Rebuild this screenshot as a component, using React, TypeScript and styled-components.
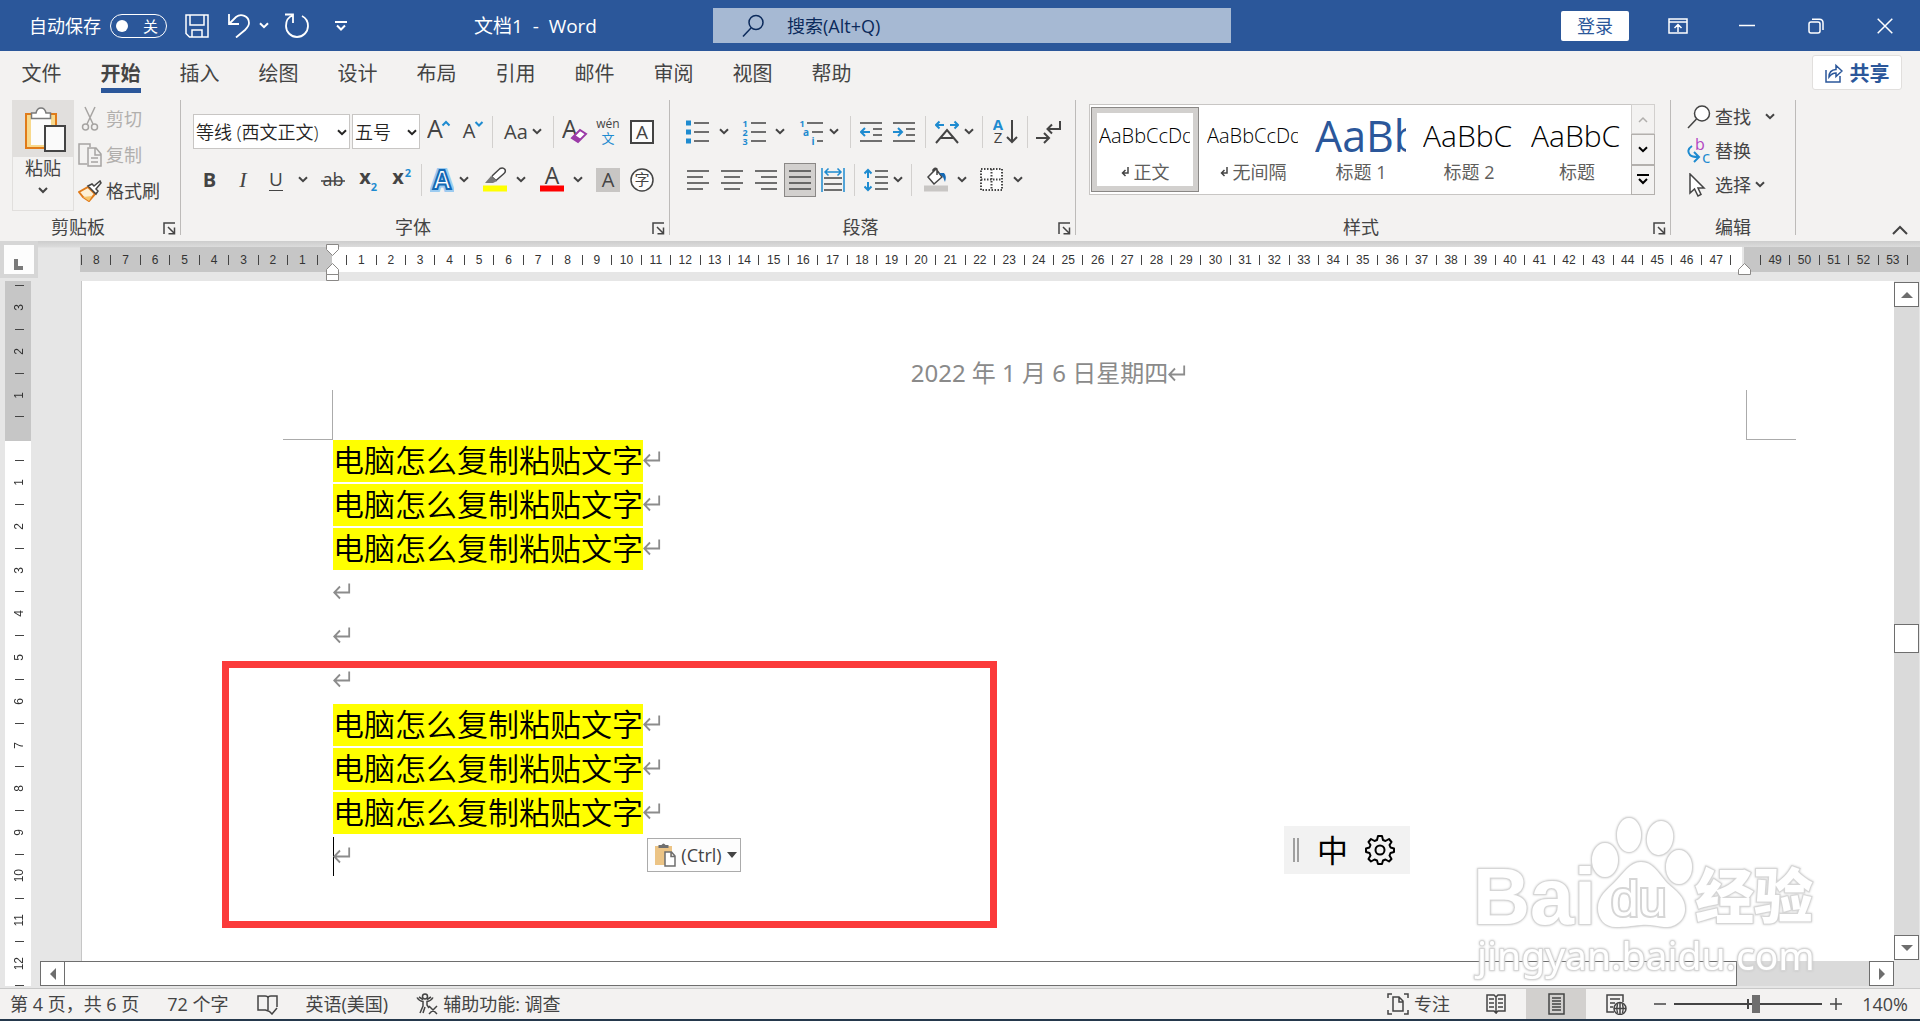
import React from "react";
import styled, { createGlobalStyle, css } from "styled-components";

const INK = "#444444";
const BLUE = "#1e8bd0";
const BRAND = "#2b579a";

const GlobalStyle = createGlobalStyle`
  * { box-sizing: border-box; }
  html, body { margin: 0; padding: 0; }
  body {
    font-family: "Open Sans", "Noto Sans CJK SC", sans-serif;
    font-size: 18px;
    color: ${INK};
    overflow: hidden;
  }
  button, input, select { font-family: inherit; font-size: inherit; color: inherit; }
  button { background: none; border: 0; padding: 0; cursor: pointer; }
  svg { display: block; flex: none; }
  p, h1 { margin: 0; font-weight: 400; }
`;

const Window = styled.div`
  display: flex;
  flex-direction: column;
  height: 100vh;
  background: #e6e6e6;
`;

/* ---------- title bar ---------- */

const TitleBar = styled.header`
  display: grid;
  grid-template-columns: 713fr 518fr 689fr;
  align-items: center;
  height: 51px;
  flex: none;
  background: ${BRAND};
  color: #fff;
`;

const TitleLeft = styled.div`
  display: flex;
  align-items: center;
  padding-left: 29px;
`;

const AutoSave = styled.label`
  display: flex;
  align-items: center;
  gap: 9px;
  line-height: 24px;
  margin-right: 9px;
`;

const Switch = styled.span`
  position: relative;
  display: flex;
  align-items: center;
  justify-content: flex-end;
  width: 57px;
  height: 24px;
  padding-right: 8px;
  border: 1px solid #fff;
  border-radius: 12px;
  font-size: 15px;
  &::before {
    content: "";
    position: absolute;
    left: 5px;
    width: 12px;
    height: 12px;
    border-radius: 50%;
    background: #fff;
  }
  input {
    position: absolute;
    inset: 0;
    margin: 0;
    opacity: 0;
  }
`;

const IconButton = styled.button<{ $w: number; $gap?: number; $on?: boolean }>`
  display: flex;
  align-items: center;
  justify-content: center;
  gap: ${(p) => p.$gap ?? 5}px;
  width: ${(p) => p.$w}px;
  height: 34px;
  flex: none;
  ${(p) => p.$on && css`
    background: #d2d0ce;
    border: 1px solid #8a8886;
  `}
`;

const DocTitle = styled.h1`
  margin-left: auto;
  padding-right: 116px;
  font-size: 19px;
  line-height: 24px;
  white-space: pre;
`;

const SearchBox = styled.label`
  display: flex;
  align-items: center;
  height: 35px;
  padding-left: 29px;
  gap: 23px;
  background: #a6b9d3;
  color: #0b2a5b;
  input {
    flex: 1;
    min-width: 0;
    border: 0;
    padding: 0;
    background: transparent;
    outline: 0;
  }
  input::placeholder { color: #0b2a5b; opacity: 1; }
`;

const TitleRight = styled.div`
  display: flex;
  align-items: center;
  justify-content: flex-end;
  padding-right: 1px;
`;

const SignIn = styled.button`
  width: 68px;
  height: 30px;
  margin-right: 14px;
  border-radius: 2px;
  background: #fff;
  color: ${BRAND};
  line-height: 24px;
`;

/* ---------- ribbon tabs ---------- */

const TabBar = styled.nav`
  display: flex;
  height: 47px;
  flex: none;
  padding: 0 18px 0 2px;
  background: #f3f2f1;
`;

const Tab = styled.button<{ $active?: boolean }>`
  display: flex;
  flex-direction: column;
  align-items: center;
  width: 79px;
  padding-top: 8px;
  font-size: 20px;
  line-height: 29px;
  font-weight: ${(p) => (p.$active ? 700 : 400)};
  span {
    border-bottom: 5px solid ${(p) => (p.$active ? BRAND : "transparent")};
  }
`;

const Share = styled.button`
  display: flex;
  align-items: center;
  justify-content: center;
  gap: 7px;
  width: 90px;
  height: 35px;
  margin: 4px 0 0 auto;
  border: 1px solid #e1dfdd;
  border-radius: 3px;
  background: #fff;
  color: ${BRAND};
  font-size: 20px;
  font-weight: 700;
`;

/* ---------- ribbon ---------- */

const Ribbon = styled.div`
  display: flex;
  height: 143px;
  flex: none;
  padding: 2px 0 6px;
  background: #f3f2f1;
`;

const Group = styled.section<{ $pad: string }>`
  display: flex;
  flex-direction: column;
  border-right: 1px solid #bdbbb9;
  padding: ${(p) => p.$pad};
`;

const GroupBody = styled.div<{ $top: number }>`
  display: flex;
  flex: 1;
  align-items: flex-start;
  padding-top: ${(p) => p.$top}px;
`;

const GroupFoot = styled.div<{ $l: number; $r: number }>`
  display: flex;
  align-items: flex-end;
  margin: 0 -${(p) => p.$r}px 0 -${(p) => p.$l}px;
  line-height: 16px;
  span { flex: 1; text-align: center; }
  button { width: 24px; padding-left: 7px; }
`;

const Stack = styled.div<{ $gap?: number }>`
  display: flex;
  flex-direction: column;
  gap: ${(p) => p.$gap ?? 0}px;
`;

const Row = styled.div`
  display: flex;
  align-items: center;
  height: 35px;
`;

const Sep = styled.i`
  width: 1px;
  height: 32px;
  margin: 0 4px;
  background: #d2d0ce;
`;

const Paste = styled.button`
  display: flex;
  flex-direction: column;
  align-items: center;
  width: 62px;
  height: 111px;
  margin-right: 4px;
  border: 1px solid #e1dfdd;
  line-height: 22px;
`;

const PasteTop = styled.span`
  display: flex;
  justify-content: center;
  align-self: stretch;
  height: 56px;
  padding: 6px 0 0 4px;
  background: #e1dfdd;
`;

const Command = styled.button<{ $h: number; $gap?: number; $off?: boolean }>`
  display: flex;
  align-items: center;
  height: ${(p) => p.$h}px;
  gap: 4px;
  line-height: 24px;
  color: ${(p) => (p.$off ? "#b1afad" : INK)};
  svg:last-child:not(:first-child) { margin-left: ${(p) => p.$gap ?? 0}px; }
`;

const SelectWrap = styled.label<{ $w: number }>`
  position: relative;
  width: ${(p) => p.$w}px;
  height: 35px;
  margin-right: 2px;
  &:last-of-type { margin-right: 0; }
  select {
    appearance: none;
    width: 100%;
    height: 100%;
    border: 1px solid #c8c6c4;
    border-radius: 0;
    padding: 0 0 0 2px;
    background: #fff;
    color: #252423;
    font-weight: 350;
  }
  svg {
    position: absolute;
    right: 3px;
    top: 15px;
    pointer-events: none;
  }
`;

const Glyph = styled.span<{ $size?: number; $bold?: boolean; $italic?: boolean }>`
  font-size: ${(p) => p.$size ?? 20}px;
  line-height: 24px;
  font-weight: ${(p) => (p.$bold ? 700 : 400)};
  ${(p) => p.$italic && css`
    font-family: "Liberation Serif", serif;
    font-style: italic;
  `}
`;

const Underlined = styled.span`
  width: 14px;
  text-align: center;
  font-size: 19px;
  line-height: 22px;
  border-bottom: 1px solid ${INK};
`;

const Gallery = styled.div`
  display: flex;
  height: 91px;
  width: 566px;
  border: 1px solid #c8c6c4;
  background: #fff;
`;

const StyleItem = styled.button<{ $on?: boolean }>`
  display: flex;
  flex-direction: column;
  width: 108px;
  height: 85px;
  margin-top: 2px;
  padding: 0 2px;
  border: 6px solid #fff;
  outline-offset: -1px;
  overflow: hidden;
  ${(p) => p.$on && css`
    border-color: #d2d0ce;
    outline: 1px solid #8a8886;
  `}
  &:first-child { margin-left: 1px; }
`;

const Sample = styled.span<{ $size: number; $color?: string; $light?: boolean }>`
  height: 47px;
  width: 91px;
  overflow: hidden;
  text-align: left;
  white-space: nowrap;
  font-size: ${(p) => p.$size}px;
  line-height: 46px;
  font-weight: ${(p) => (p.$light ? 350 : 400)};
  color: ${(p) => p.$color ?? "#000"};
`;

const StyleName = styled.span`
  display: flex;
  align-items: center;
  justify-content: center;
  gap: 5px;
  width: 92px;
  line-height: 24px;
  color: #605e5c;
`;

const GalleryNav = styled.div`
  display: flex;
  flex-direction: column;
  width: 24px;
  margin: -1px -1px -1px auto;
  button {
    display: flex;
    align-items: center;
    justify-content: center;
    flex: 1;
    border: 1px solid #b3b0ad;
    background: #f3f2f1;
  }
  button:first-child { border-color: #d2d0ce; }
`;

const Collapse = styled.button`
  margin-left: auto;
  align-self: flex-end;
  padding: 0 12px 0 0;
`;

/* ---------- rulers ---------- */

const RulerRow = styled.div`
  display: flex;
  height: 40px;
  flex: none;
  background: linear-gradient(#cdcdcd, #dcdcdc 6px, #e6e6e6 7px);
`;

const Corner = styled.button`
  width: 38px;
  height: 37px;
  border: 4px solid #d6d6d6;
  background: #fdfdfd;
  padding: 10px 0 0 10px;
`;

const HRuler = styled.div`
  position: relative;
  display: flex;
  flex: 1;
  height: 25px;
  margin: 6px 0 0 42px;
  padding: 1px 12px 0 1px;
  align-items: center;
  background: linear-gradient(90deg, #c6c6c6 252px, #fff 252px, #fff calc(100% - 178px), #e6e6e6 calc(100% - 178px), #e6e6e6 calc(100% - 176px), #c6c6c6 calc(100% - 176px));
`;

const HCell = styled.span`
  flex: 1 1 0;
  min-width: 0;
  height: 10px;
  border-left: 1px solid ${INK};
  text-align: center;
  font-family: "Liberation Sans", sans-serif;
  font-size: 12px;
  line-height: 11px;
  color: #333;
  &:last-of-type { border-right: 1px solid ${INK}; }
`;

const Marker = styled.svg<{ $left: string; $top: number }>`
  position: absolute;
  left: ${(p) => p.$left};
  top: ${(p) => p.$top}px;
`;

const Body = styled.main`
  position: relative;
  display: flex;
  flex: 1;
  min-height: 0;
`;

const VRuler = styled.div`
  display: flex;
  flex-direction: column;
  width: 26px;
  flex: none;
  margin: 0 9px 2px 5px;
  padding: 4px 0 0 2px;
  align-items: center;
  background: linear-gradient(#c6c6c6 160px, #fff 160px);
`;

const VCell = styled.span`
  display: flex;
  flex: 1 1 0;
  min-height: 0;
  width: 9px;
  align-items: center;
  justify-content: center;
  border-top: 1px solid ${INK};
  font-family: "Liberation Sans", sans-serif;
  font-size: 12px;
  line-height: 12px;
  color: #333;
  &:last-child { border-bottom: 1px solid ${INK}; }
  span {
    writing-mode: vertical-rl;
    transform: rotate(180deg);
  }
`;

/* ---------- document ---------- */

const Main = styled.div`
  display: flex;
  flex-direction: column;
  flex: 1;
  min-width: 0;
`;

const Page = styled.article`
  position: relative;
  flex: 1;
  min-height: 0;
  margin-left: 41px;
  padding: 77px 148px 0 251px;
  border-left: 1px solid #c6c6c6;
  background: #fff;
  overflow: hidden;
`;

const PageHeader = styled.p`
  display: flex;
  align-items: center;
  justify-content: center;
  margin-bottom: 52px;
  font-family: "Noto Sans", "Noto Sans CJK SC", sans-serif;
  font-size: 24px;
  line-height: 30px;
  color: #8a8a8a;
  svg { margin-right: -18px; }
`;

const Line = styled.p`
  display: flex;
  align-items: flex-start;
  height: 44px;
  svg { margin-top: 10px; }
`;

const Marked = styled.mark`
  height: 42px;
  background: #ffff00;
  color: #000;
  font-family: "Noto Sans CJK SC", sans-serif;
  font-size: 31px;
  line-height: 38px;
  font-weight: 350;
`;

const Caret = styled.i`
  width: 1px;
  height: 39px;
  margin: 1px -1px 0 0;
  background: #000;
`;

const CropMark = styled.i<{ $side: "left" | "right" }>`
  position: absolute;
  top: 109px;
  width: 50px;
  height: 50px;
  border-bottom: 1px solid #ababab;
  ${(p) => p.$side === "left"
    ? css`left: 201px; border-right: 1px solid #ababab;`
    : css`right: 98px; border-left: 1px solid #ababab;`}
`;

const RedFrame = styled.div`
  position: absolute;
  left: 140px;
  top: 380px;
  width: 775px;
  height: 267px;
  border: 7px solid #fb3a3a;
  pointer-events: none;
`;

const PasteOptions = styled.button`
  position: absolute;
  left: 565px;
  top: 557px;
  display: flex;
  align-items: center;
  justify-content: space-between;
  width: 94px;
  height: 34px;
  padding: 0 3px 0 7px;
  border: 1px solid #ababab;
  background: #fdfdfd;
  line-height: 24px;
`;

const ImeBar = styled.div`
  position: absolute;
  left: 1202px;
  top: 545px;
  display: flex;
  align-items: center;
  width: 126px;
  height: 48px;
  padding-left: 9px;
  background: #f2f2f2;
  color: #000;
  span {
    margin: 0 17px 0 18px;
    font-size: 31px;
    line-height: 40px;
  }
`;

const Grip = styled.i`
  width: 6px;
  height: 24px;
  border: solid #a0a0a0;
  border-width: 0 2px;
`;

const Watermark = styled.svg`
  position: absolute;
  right: 90px;
  bottom: -3px;
  pointer-events: none;
  filter: drop-shadow(0 0 1px #c4c4c4);
`;

/* ---------- scroll bars ---------- */

const ScrollButton = styled.button`
  display: flex;
  align-items: center;
  justify-content: center;
  width: 25px;
  height: 25px;
  flex: none;
  border: 1px solid #6e6e6e;
  background: #fff;
`;

const HScroll = styled.div`
  display: flex;
  height: 25px;
  flex: none;
  margin-bottom: 2px;
  background: #dadada;
`;

const HThumb = styled.div`
  flex: 1;
  margin-right: 132px;
  border: 1px solid #6e6e6e;
  border-left: 0;
  background: #fff;
`;

const VScroll = styled.div`
  display: flex;
  flex-direction: column;
  width: 25px;
  flex: none;
  margin: 1px 1px 28px 0;
  background: #dadada;
`;

const VThumb = styled.div`
  height: 29px;
  margin: auto 0;
  border: 1px solid #6e6e6e;
  background: #fff;
`;

const VTrack = styled.div`
  display: flex;
  flex-direction: column;
  flex: 1;
  padding-top: 34px;
`;

/* ---------- status bar ---------- */

const StatusBar = styled.footer`
  display: flex;
  align-items: center;
  height: 33px;
  flex: none;
  padding-left: 10px;
  border-top: 1px solid #c8c8c8;
  border-bottom: 2px solid #24384c;
  background: #f3f2f1;
  line-height: 24px;
`;

const StatusItem = styled.button`
  display: flex;
  align-items: center;
  gap: 5px;
  margin-right: 28px;
  line-height: 24px;
  white-space: nowrap;
`;

const FocusItem = styled(StatusItem)`
  margin: 0 16px 0 auto;
`;

const ViewButton = styled.button<{ $on?: boolean }>`
  display: flex;
  align-items: center;
  justify-content: center;
  align-self: stretch;
  width: 60px;
  background: ${(p) => (p.$on ? "#d2d0ce" : "transparent")};
`;

const Zoom = styled.div`
  display: flex;
  align-items: center;
  gap: 8px;
  margin-left: 8px;
  padding-right: 12px;
  output { width: 58px; text-align: right; }
`;

const Slider = styled.input`
  appearance: none;
  width: 148px;
  height: 22px;
  margin: 0;
  background:
    linear-gradient(${INK}, ${INK}) 73px 50% / 2px 10px no-repeat,
    linear-gradient(${INK}, ${INK}) 0 50% / 100% 2px no-repeat;
  &::-webkit-slider-thumb {
    appearance: none;
    width: 8px;
    height: 18px;
    background: #6e6e6e;
  }
`;

/* ---------- icons ---------- */

type IconProps = { w: number; h?: number; c?: string; s?: number; children: React.ReactNode };
const Icon = ({ w, h = w, c = INK, s = 1.5, children }: IconProps) => (
  <svg width={w} height={h} viewBox={`0 0 ${w} ${h}`} fill="none" stroke={c} strokeWidth={s} aria-hidden="true">
    {children}
  </svg>
);

const Chevron = ({ c = INK }: { c?: string }) => (
  <Icon w={10} h={7} c={c} s={2}><path d="M1 1.2 5 5.2 9 1.2" /></Icon>
);

const ReturnMark = () => (
  <Icon w={18} h={18} c="#8c8c8c" s={1.8}><path d="M16.2 1.5V10.5H1M7 4.5 1.2 10.5 7 16.5" /></Icon>
);

type LetterProps = { x: number; y: number; size: number; fill?: string; bold?: boolean; children: string };
const Letter = ({ x, y, size, fill = INK, bold, children }: LetterProps) => (
  <text x={x} y={y} fontSize={size} fill={fill} stroke="none" fontWeight={bold ? 700 : 400} textAnchor="middle">{children}</text>
);

const Lines = ({ y, x1, x2 }: { y: number[]; x1: number[]; x2: number[] }) => (
  <path d={y.map((v, i) => `M${x1[i]} ${v}H${x2[i]}`).join("")} />
);

const Launcher = () => (
  <Icon w={13} h={13}><path d="M1 12V1H12M5 5 11 11M11.5 5.5V11.7H5.5" /></Icon>
);

const SearchIcon = ({ c }: { c?: string }) => (
  <Icon w={24} h={24} c={c}><circle cx="15" cy="8.5" r="7.5" fill="#fff" /><path d="M9.5 14 1 23" /></Icon>
);

const Foot = ({ label, l, r }: { label: string; l: number; r: number }) => (
  <GroupFoot $l={l} $r={r}>
    <span>{label}</span>
    <button aria-label={`${label}设置`}><Launcher /></button>
  </GroupFoot>
);

const tabs = ["文件", "开始", "插入", "绘图", "设计", "布局", "引用", "邮件", "审阅", "视图", "帮助"];
const hCells = Array.from({ length: 62 }, (_, i) => i - 8);
const vCells = Array.from({ length: 16 }, (_, i) => i - 3);
const phrase = "电脑怎么复制粘贴文字";
const paragraphs = [phrase, phrase, phrase, "", "", "", phrase, phrase, phrase];

const TopBar = () => (
  <TitleBar>
    <TitleLeft>
      <AutoSave>
        自动保存
        <Switch><input type="checkbox" />关</Switch>
      </AutoSave>
      <IconButton $w={42} aria-label="保存">
        <Icon w={24} c="#fff"><path d="M1 1H23V23H4.5L1 19.5ZM5 1V11H19V1M7 23V16H17V23" /></Icon>
      </IconButton>
      <IconButton $w={60} $gap={8} aria-label="撤消">
        <Icon w={24} h={25} c="#fff" s={1.8}><path d="M2 1V11H12M2 11 9 4C14 0 22 3 22 10C22 13 20 15 18 17L9 24.5" /></Icon>
        <Chevron c="#fff" />
      </IconButton>
      <IconButton $w={38} aria-label="重复">
        <Icon w={26} h={25} c="#fff" s={1.8}><path d="M1 1.5H9V10M9 2.5C4 4 2 8.5 2 13C2 19 7 24 13 24C19 24 24 19 24 13C24 8.5 22 5 18 3" /></Icon>
      </IconButton>
      <IconButton $w={50} aria-label="自定义快速访问工具栏">
        <Icon w={12} h={10} c="#fff" s={2}><path d="M0 1H12M2 4.5 6 8.5 10 4.5" /></Icon>
      </IconButton>
      <DocTitle>{"文档1  -  Word"}</DocTitle>
    </TitleLeft>
    <SearchBox>
      <Icon w={22} h={24} c="#0b2a5b"><circle cx="14" cy="8.5" r="7" /><path d="M9 14 1 22.5" /></Icon>
      <input type="search" placeholder="搜索(Alt+Q)" aria-label="搜索" />
    </SearchBox>
    <TitleRight>
      <SignIn>登录</SignIn>
      <IconButton $w={69} aria-label="功能区显示选项">
        <Icon w={20} h={16} c="#fff"><path d="M1 1H19V15H1ZM1 4H19M10 14V7M6.5 10 10 6.5 13.5 10" /></Icon>
      </IconButton>
      <IconButton $w={69} aria-label="最小化"><Icon w={16} c="#fff"><path d="M0 7.5H16" /></Icon></IconButton>
      <IconButton $w={69} aria-label="还原">
        <Icon w={16} c="#fff"><rect x="1" y="4" width="11" height="11" rx="2" /><path d="M4 1.2H11.5Q15 1.2 15 5V12" /></Icon>
      </IconButton>
      <IconButton $w={69} aria-label="关闭"><Icon w={16} c="#fff"><path d="M.7.7 15.3 15.3M15.3.7.7 15.3" /></Icon></IconButton>
    </TitleRight>
  </TitleBar>
);

const Clipboard = () => (
  <Group $pad="0 20px 0 12px" aria-label="剪贴板">
    <GroupBody $top={0}>
      <Paste>
        <PasteTop>
          <Icon w={42} h={46}>
            <rect x="2" y="7" width="30" height="34" fill="#f8d98c" stroke="#e07b1a" strokeWidth="2" />
            <rect x="7" y="10" width="20" height="28" fill="#fcfcfc" stroke="none" />
            <path d="M7.5 11.5V6H12Q13 1 17 1Q21 1 22 6H26.5V11.5Z" fill="#fff" stroke="#7a7a7a" />
            <rect x="21" y="19" width="20" height="25" fill="#fafafa" strokeWidth="2" />
          </Icon>
        </PasteTop>
        粘贴
        <Icon w={10} h={26} s={2}><path d="M1 9 5 13 9 9" /></Icon>
      </Paste>
      <Stack>
        <Command $h={37} $off>
          <Icon w={24} h={26} c="#a6a4a2"><path d="M7 1 15 18M17 1 9 18" /><circle cx="7.5" cy="21" r="3" /><circle cx="16.5" cy="21" r="3" /></Icon>
          剪切
        </Command>
        <Command $h={36} $off>
          <Icon w={24} h={24} c="#a6a4a2"><path d="M9 21H1V1H12V4" /><path d="M10 5H18L23 11V23H10ZM17 5V12H23M13 15H20M13 19H20" /></Icon>
          复制
        </Command>
        <Command $h={36}>
          <Icon w={24} h={22}>
            <path d="M1 12 10 7 17 14 11 21 5 17Z" fill="#fdf0d5" stroke="#e07b1a" strokeWidth="2" />
            <path d="M5 17 14 16 11 21Z" fill="#f5c469" stroke="none" />
            <path d="M10 6 14 4 16 6 22 1 23 3 18 9 20 11 18 14Z" fill="#fff" />
          </Icon>
          格式刷
        </Command>
      </Stack>
    </GroupBody>
    <Foot label="剪贴板" l={12} r={20} />
  </Group>
);

const FontGroup = () => (
  <Group $pad="0 9px 0 12px" aria-label="字体">
    <GroupBody $top={14}>
      <Stack $gap={13}>
        <Row>
          <SelectWrap $w={157}>
            <select aria-label="字体"><option>等线 (西文正文)</option></select><Chevron c="#252423" />
          </SelectWrap>
          <SelectWrap $w={68}>
            <select aria-label="字号"><option>五号</option></select><Chevron c="#252423" />
          </SelectWrap>
          <IconButton $w={38} aria-label="增大字号">
            <Icon w={24} h={28}><Letter x={8} y={20} size={25}>A</Letter><path d="M15.5 7.5 19 4 22.5 7.5" stroke={BLUE} strokeWidth="2" /></Icon>
          </IconButton>
          <IconButton $w={30} aria-label="减小字号">
            <Icon w={22} h={28}><Letter x={7} y={20} size={20}>A</Letter><path d="M13.5 4 17 7.5 20.5 4" stroke={BLUE} strokeWidth="2" /></Icon>
          </IconButton>
          <Sep />
          <IconButton $w={52} $gap={4} aria-label="更改大小写"><Glyph $size={20}>Aa</Glyph><Chevron /></IconButton>
          <Sep />
          <IconButton $w={34} aria-label="清除所有格式">
            <Icon w={26} h={26}>
              <Letter x={8} y={19} size={25}>A</Letter>
              <path d="M10 19 18 11 24 15 16 23Z" fill="#fff" stroke="#9b3ba8" strokeWidth="2" /><path d="M10 19 13 16 19 20 16 23Z" fill="#9b3ba8" stroke="none" />
            </Icon>
          </IconButton>
          <IconButton $w={32} aria-label="拼音指南">
            <Icon w={26} h={28}><Letter x={13} y={10} size={12}>wén</Letter><Letter x={13} y={25} size={13} fill={BLUE}>文</Letter></Icon>
          </IconButton>
          <IconButton $w={36} aria-label="字符边框">
            <Icon w={24} s={2}><rect x="1" y="1" width="22" height="22" fill="#fdfdfd" /><Letter x={12} y={19} size={19}>A</Letter></Icon>
          </IconButton>
        </Row>
        <Row>
          <IconButton $w={33} aria-label="加粗"><Glyph $bold>B</Glyph></IconButton>
          <IconButton $w={34} aria-label="倾斜"><Glyph $italic $size={22}>I</Glyph></IconButton>
          <IconButton $w={32} aria-label="下划线"><Underlined>U</Underlined></IconButton>
          <IconButton $w={22} aria-label="下划线类型"><Chevron /></IconButton>
          <IconButton $w={37} aria-label="删除线">
            <Icon w={24}><Letter x={12} y={18} size={18}>ab</Letter><path d="M0 13H24" /></Icon>
          </IconButton>
          <IconButton $w={36} aria-label="下标">
            <Icon w={20} h={28}><Letter x={6} y={18} size={20} bold>x</Letter><Letter x={15} y={25} size={11} fill={BLUE} bold>2</Letter></Icon>
          </IconButton>
          <IconButton $w={30} aria-label="上标">
            <Icon w={20} h={28}><Letter x={6} y={18} size={20} bold>x</Letter><Letter x={16} y={11} size={11} fill={BLUE} bold>2</Letter></Icon>
          </IconButton>
          <Sep />
          <IconButton $w={46} aria-label="文本效果">
            <Icon w={24}>
              <text x="12" y="21" fontSize="26" fontWeight="700" textAnchor="middle" fill="#fff" stroke="#9ccbf0" strokeWidth="6">A</text>
              <text x="12" y="21" fontSize="26" fontWeight="700" textAnchor="middle" fill="#fff" stroke="#1469b5" strokeWidth="2">A</text>
            </Icon>
            <Chevron />
          </IconButton>
          <IconButton $w={64} $gap={9} aria-label="文本突出显示颜色">
            <Icon w={24} h={25}>
              <path d="M9 9 17 1.5Q20 0 22 2.5 23 5 21 6.5L13 13.5 8.5 9.5" fill="#fff" /><path d="M8 9 14 14 10 16H2Z" fill="#7a7a7a" stroke="none" />
              <path d="M0 21.5H24" stroke="#ffff00" strokeWidth="6" />
            </Icon>
            <Chevron />
          </IconButton>
          <IconButton $w={50} $gap={9} aria-label="字体颜色">
            <Icon w={24} h={25}><Letter x={12} y={17} size={23}>A</Letter><path d="M0 21.5H24" stroke="#ff0000" strokeWidth="6" /></Icon>
            <Chevron />
          </IconButton>
          <IconButton $w={44} aria-label="字符底纹">
            <Icon w={24}><rect width="24" height="24" fill="#c8c6c4" stroke="none" /><Letter x={12} y={19} size={20}>A</Letter></Icon>
          </IconButton>
          <IconButton $w={24} aria-label="带圈字符">
            <Icon w={24}><circle cx="12" cy="12" r="11" fill="#fdfdfd" /><Letter x={12} y={17} size={15}>字</Letter></Icon>
          </IconButton>
        </Row>
      </Stack>
    </GroupBody>
    <Foot label="字体" l={12} r={9} />
  </Group>
);

const ParagraphGroup = () => (
  <Group $pad="0 11px 0 10px" aria-label="段落">
    <GroupBody $top={14}>
      <Stack $gap={13}>
        <Row>
          <IconButton $w={54} $gap={10} aria-label="项目符号">
            <Icon w={23} h={24}>
              <path d="M0 3H5M0 12H5M0 21H5" stroke={BLUE} strokeWidth="5" /><Lines y={[3, 12, 21]} x1={[8, 8, 8]} x2={[23, 23, 23]} />
            </Icon>
            <Chevron />
          </IconButton>
          <IconButton $w={58} $gap={9} aria-label="编号">
            <Icon w={24} h={28}>
              <Letter x={3} y={9} size={9} fill={BLUE} bold>1</Letter><Letter x={3} y={18} size={9} fill={BLUE} bold>2</Letter><Letter x={3} y={27} size={9} fill={BLUE} bold>3</Letter>
              <Lines y={[5, 14, 23]} x1={[9, 9, 9]} x2={[24, 24, 24]} />
            </Icon>
            <Chevron />
          </IconButton>
          <IconButton $w={54} $gap={6} aria-label="多级列表">
            <Icon w={24} h={28}>
              <Letter x={3} y={9} size={9} fill={BLUE} bold>1</Letter><Letter x={7} y={18} size={10} fill={BLUE} bold>a</Letter><Letter x={14} y={27} size={10} fill={BLUE} bold>i</Letter>
              <Lines y={[5, 14, 23]} x1={[8, 13, 18]} x2={[24, 24, 24]} />
            </Icon>
            <Chevron />
          </IconButton>
          <Sep />
          <IconButton $w={32} aria-label="减少缩进量">
            <Icon w={22}><Lines y={[2, 8, 14, 20]} x1={[0, 13, 13, 0]} x2={[22, 22, 22, 22]} /><path d="M10 11H1M5 7 1 11 5 15" stroke={BLUE} strokeWidth="2" /></Icon>
          </IconButton>
          <IconButton $w={34} aria-label="增加缩进量">
            <Icon w={22}><Lines y={[2, 8, 14, 20]} x1={[0, 13, 13, 0]} x2={[22, 22, 22, 22]} /><path d="M0 11H9M5 7 9 11 5 15" stroke={BLUE} strokeWidth="2" /></Icon>
          </IconButton>
          <Sep />
          <IconButton $w={48} aria-label="中文版式">
            <Icon w={24}>
              <path d="M1 23 12 10 23 23M5.5 18H18.5" strokeWidth="2" />
              <path d="M9 5H1M4.5 1.5 1 5 4.5 8.5M15 5H23M19.5 1.5 23 5 19.5 8.5" stroke={BLUE} strokeWidth="2" />
            </Icon>
            <Chevron />
          </IconButton>
          <Sep />
          <IconButton $w={36} aria-label="排序">
            <Icon w={25} h={28}><Letter x={5} y={12} size={15} fill={BLUE} bold>A</Letter><Letter x={5} y={25} size={15}>Z</Letter><path d="M19 2V24M14 19 19 24 24 19" strokeWidth="2" /></Icon>
          </IconButton>
          <Sep />
          <IconButton $w={32} aria-label="显示编辑标记">
            <Icon w={25} h={24}><path d="M24 1V9H12M16 4.5 11.5 9 16 13.5M0 18H12M8 13 13 18 8 23" strokeWidth="2" /></Icon>
          </IconButton>
        </Row>
        <Row>
          <IconButton $w={36} aria-label="左对齐"><Icon w={22}><Lines y={[2, 8, 14, 20]} x1={[0, 0, 0, 0]} x2={[22, 16, 22, 16]} /></Icon></IconButton>
          <IconButton $w={32} aria-label="居中"><Icon w={22}><Lines y={[2, 8, 14, 20]} x1={[0, 3, 0, 3]} x2={[22, 19, 22, 19]} /></Icon></IconButton>
          <IconButton $w={36} aria-label="右对齐"><Icon w={22}><Lines y={[2, 8, 14, 20]} x1={[0, 6, 0, 6]} x2={[22, 22, 22, 22]} /></Icon></IconButton>
          <IconButton $w={32} $on aria-label="两端对齐"><Icon w={22}><Lines y={[2, 8, 14, 20]} x1={[0, 0, 0, 0]} x2={[22, 22, 22, 22]} /></Icon></IconButton>
          <IconButton $w={34} aria-label="分散对齐">
            <Icon w={24}>
              <Lines y={[10, 16, 22]} x1={[3, 3, 3]} x2={[21, 21, 21]} />
              <path d="M1 0V24M23 0V24M4 4H20M7.5.5 4 4 7.5 7.5M16.5.5 20 4 16.5 7.5" stroke={BLUE} />
            </Icon>
          </IconButton>
          <Sep />
          <IconButton $w={48} aria-label="行和段落间距">
            <Icon w={24}>
              <Lines y={[3, 9, 15, 21]} x1={[11, 11, 11, 11]} x2={[24, 24, 24, 24]} />
              <path d="M4 10V2M.5 5.5 4 2 7.5 5.5M4 14V22M.5 18.5 4 22 7.5 18.5" stroke={BLUE} strokeWidth="2" />
            </Icon>
            <Chevron />
          </IconButton>
          <Sep />
          <IconButton $w={58} $gap={9} aria-label="底纹">
            <Icon w={24} h={25}>
              <path d="M4 10 12 2 18 10 10 17ZM9 6V3Q11 0 13 2V8" fill="#fff" /><path d="M15 6 20 6Q23 9 21 15L19 10Z" fill="#1469b5" stroke="none" />
              <path d="M0 21.5H24" stroke="#c8c6c4" strokeWidth="6" />
            </Icon>
            <Chevron />
          </IconButton>
          <IconButton $w={54} $gap={10} aria-label="边框">
            <Icon w={23}><path d="M1 1H22V22H1ZM11.5 1V22M1 11.5H22" fill="#fdfdfd" strokeWidth="2" strokeDasharray="1.5 1.5" /></Icon>
            <Chevron />
          </IconButton>
        </Row>
      </Stack>
    </GroupBody>
    <Foot label="段落" l={10} r={11} />
  </Group>
);

const SmallReturn = () => <Icon w={8} h={12}><path d="M7 1V7H1.5M4.5 4 1.5 7 4.5 10" /></Icon>;

const StylesGroup = () => (
  <Group $pad="0 15px 0 13px" aria-label="样式">
    <GroupBody $top={4}>
      <Gallery>
        <StyleItem $on><Sample $size={20} $light>AaBbCcDd</Sample><StyleName><SmallReturn />正文</StyleName></StyleItem>
        <StyleItem><Sample $size={20} $light>AaBbCcDd</Sample><StyleName><SmallReturn />无间隔</StyleName></StyleItem>
        <StyleItem><Sample $size={43} $color={BRAND}>AaBb</Sample><StyleName>标题 1</StyleName></StyleItem>
        <StyleItem><Sample $size={30} $light>AaBbC</Sample><StyleName>标题 2</StyleName></StyleItem>
        <StyleItem><Sample $size={30} $light>AaBbC</Sample><StyleName>标题</StyleName></StyleItem>
        <GalleryNav>
          <button aria-label="上一行"><Icon w={10} h={7} c="#b1afad"><path d="M1 6 5 2 9 6" /></Icon></button>
          <button aria-label="下一行"><Chevron c="#000" /></button>
          <button aria-label="其他样式"><Icon w={12} h={11} c="#000" s={2}><path d="M0 1H12M2 5 6 9 10 5" /></Icon></button>
        </GalleryNav>
      </Gallery>
    </GroupBody>
    <Foot label="样式" l={13} r={15} />
  </Group>
);

const EditGroup = () => (
  <Group $pad="0 20px 0 16px" aria-label="编辑">
    <GroupBody $top={0}>
      <Stack>
        <Command $h={33} $gap={10}><SearchIcon />查找<Chevron /></Command>
        <Command $h={35}>
          <Icon w={24} h={28}>
            <Letter x={13} y={13} size={16} fill="#b146c2">b</Letter><Letter x={19} y={26} size={17} fill={BLUE}>c</Letter>
            <path d="M5 9Q-1 13 3 18 5 20 11 20M7 15 12 20 7 25" stroke={BLUE} strokeWidth="2" />
          </Icon>
          替换
        </Command>
        <Command $h={33}>
          <Icon w={24} h={24}><path d="M3 1V20L7.5 16 11 23 14 21.5 11 15H17Z" fill="#fff" /></Icon>
          选择<Chevron />
        </Command>
      </Stack>
    </GroupBody>
    <GroupFoot $l={16} $r={20}><span>编辑</span></GroupFoot>
  </Group>
);

const Document = () => (
  <Page>
    <PageHeader>2022 年 1 月 6 日星期四<ReturnMark /></PageHeader>
    {paragraphs.map((text, i) => (
      <Line key={i}>{text && <Marked>{text}</Marked>}<ReturnMark /></Line>
    ))}
    <Line><Caret /><ReturnMark /></Line>
    <CropMark $side="left" />
    <CropMark $side="right" />
    <RedFrame />
    <PasteOptions>
      <Icon w={21} h={24}>
        <path d="M0 3H17V22H0Z" fill="#ecc485" stroke="none" /><path d="M3.5 5V2H6.5Q8.5-1 10.5 2H13.5V5Z" fill="#6e6e6e" stroke="none" />
        <path d="M10 9H16.5L20 13V23H10ZM16 9V13.5H20" fill="#fff" stroke="#6e6e6e" />
      </Icon>
      (Ctrl)
      <Icon w={10} h={6}><path d="M0 0H10L5 6Z" fill={INK} stroke="none" /></Icon>
    </PasteOptions>
    <ImeBar>
      <Grip />
      <span>中</span>
      <Icon w={30} c="#000" s={2}>
        <path d="M13 1H17L18 5 20.5 6 24 4 26.5 7 24.5 10 25.5 12.5 29 13.5V17L25.5 18 24.5 20.5 26.5 24 24 26.5 20.5 24.5 18 25.5 17 29H13L12 25.5 9.5 24.5 6 26.5 3.5 24 5.5 20.5 4.5 18 1 17V13.5L4.5 12.5 5.5 10 3.5 7 6 4 9.5 6 12 5Z" strokeLinejoin="round" />
        <circle cx="15" cy="15" r="4.5" />
      </Icon>
    </ImeBar>
  </Page>
);

export default function App() {
  return (
    <Window>
      <GlobalStyle />
      <TopBar />
      <TabBar>
        {tabs.map((t) => <Tab key={t} $active={t === "开始"}><span>{t}</span></Tab>)}
        <Share>
          <Icon w={18} h={20} c={BRAND}><path d="M1 7V19H15V13M4 14Q4 7 11 6.5V2.5L17 8 11 13.5V10Q7 10 4 14Z" /></Icon>
          共享
        </Share>
      </TabBar>
      <Ribbon>
        <Clipboard />
        <FontGroup />
        <ParagraphGroup />
        <StylesGroup />
        <EditGroup />
        <Collapse aria-label="折叠功能区"><Icon w={16} h={10} s={2}><path d="M1 9 8 2 15 9" /></Icon></Collapse>
      </Ribbon>
      <RulerRow>
        <Corner aria-label="制表符"><Icon w={9} h={11} c="#7a7a7a" s={4}><path d="M2 0V9H9" /></Icon></Corner>
        <HRuler>
          {hCells.map((n) => <HCell key={n}>{n === 0 || n === 48 ? "" : Math.abs(n)}</HCell>)}
          <Marker $left="246px" $top={-3} width="13" height="37" viewBox="0 0 13 37" fill="#fff" stroke="#8a8886">
            <path d="M.5.5H12.5V5.5L6.5 11.5 .5 5.5ZM.5 25.5 6.5 19.5 12.5 25.5V30.5H.5ZM.5 30.5H12.5V36.5H.5Z" />
          </Marker>
          <Marker $left="calc(100% - 182px)" $top={16} width="13" height="12" viewBox="0 0 13 12" fill="#fff" stroke="#8a8886">
            <path d="M.5 6.5 6.5.5 12.5 6.5V11.5H.5Z" />
          </Marker>
        </HRuler>
      </RulerRow>
      <Body>
        <VRuler>
          {vCells.map((n) => <VCell key={n}><span>{n === 0 ? "" : Math.abs(n)}</span></VCell>)}
        </VRuler>
        <Main>
          <Document />
          <HScroll>
            <ScrollButton aria-label="向左滚动"><Icon w={6} h={12}><path d="M6 0V12L0 6Z" fill="#6e6e6e" stroke="none" /></Icon></ScrollButton>
            <HThumb />
            <ScrollButton aria-label="向右滚动"><Icon w={6} h={12}><path d="M0 0V12L6 6Z" fill="#6e6e6e" stroke="none" /></Icon></ScrollButton>
          </HScroll>
        </Main>
        <VScroll>
          <ScrollButton aria-label="向上滚动"><Icon w={12} h={6}><path d="M0 6H12L6 0Z" fill="#6e6e6e" stroke="none" /></Icon></ScrollButton>
          <VTrack><VThumb /></VTrack>
          <ScrollButton aria-label="向下滚动"><Icon w={12} h={6}><path d="M0 0H12L6 6Z" fill="#6e6e6e" stroke="none" /></Icon></ScrollButton>
        </VScroll>
        <Watermark width="370" height="190" viewBox="0 0 370 190" fill="#fff" stroke="#d6d6d6" strokeWidth="2" paintOrder="stroke">
          <text x="13" y="123" fontSize="79" fontWeight="700" fontFamily="Liberation Sans, sans-serif">Bai</text>
          <ellipse cx="145" cy="59" rx="13" ry="17" />
          <ellipse cx="169" cy="34" rx="12" ry="17" />
          <ellipse cx="200" cy="37" rx="13" ry="17" transform="rotate(10 200 37)" />
          <ellipse cx="219" cy="66" rx="13" ry="17" />
          <path d="M181 61C192 61 197 70 207 82C216 90 225 96 225 108C225 120 214 127 204 126C195 125 190 123 181 124C170 125 165 126 156 126C145 126 138 118 138 107C138 95 148 88 154 82C164 72 170 61 181 61Z" />
          <text x="151" y="115" fontSize="50" fontFamily="Liberation Sans, sans-serif" strokeWidth="4">du</text>
          <text x="235" y="117" fontSize="59" fontWeight="900" fontFamily="Noto Sans CJK SC, sans-serif">经验</text>
          <text x="17" y="169" fontSize="39" fontFamily="Noto Sans, sans-serif">jingyan.baidu.com</text>
        </Watermark>
      </Body>
      <StatusBar>
        <StatusItem>第 4 页，共 6 页</StatusItem>
        <StatusItem>72 个字</StatusItem>
        <StatusItem aria-label="校对">
          <Icon w={21} h={21}><path d="M11 3V17L8.5 16H1V2H8Q11 2 11 4Q11 2 14 2H20V13M12 17 15 20 20 14" /></Icon>
        </StatusItem>
        <StatusItem>英语(美国)</StatusItem>
        <StatusItem>
          <Icon w={22} h={22}><circle cx="9" cy="3.5" r="2.5" /><path d="M1 4.5Q3 8 7 8.5V13L4 20M17 4.5Q15 8 11 8.5V12L13 15M3 4 7 6.5M15 4 11 6.5M9 14 7 20M13 13 21 21M21 13 13 21" /></Icon>
          辅助功能: 调查
        </StatusItem>
        <FocusItem>
          <Icon w={22} h={22}><path d="M5 1H1V5M17 1H21V5M5 21H1V17M17 21H21V17M6 4H12L16 8V18H6ZM12 4V9H16" /></Icon>
          专注
        </FocusItem>
        <ViewButton aria-label="阅读视图">
          <Icon w={20} h={20}><path d="M10 3V19L8 17H1V1H8L10 3 12 1H19V17H12L10 19M3 5H8M3 9H8M3 13H8M12 5H17M12 9H17M12 13H17" /></Icon>
        </ViewButton>
        <ViewButton $on aria-label="页面视图">
          <Icon w={17} h={22}><path d="M1 1H16V21H1ZM4 5H13M4 8H13M4 11H13M4 14H13M4 17H13" /></Icon>
        </ViewButton>
        <ViewButton aria-label="Web 版式视图">
          <Icon w={21} h={21}><path d="M8 18H1V1H17V8M4 5H14M4 9H9M4 13H7" /><circle cx="14" cy="14.5" r="6" /><path d="M8 14.5H20M14 8.5V20.5M11.5 10Q10 14.5 11.5 19M16.5 10Q18 14.5 16.5 19" /></Icon>
        </ViewButton>
        <Zoom>
          <button aria-label="缩小"><Icon w={12}><path d="M0 6H12" /></Icon></button>
          <Slider type="range" min={10} max={190} defaultValue={110} aria-label="显示比例" />
          <button aria-label="放大"><Icon w={12}><path d="M0 6H12M6 0V12" /></Icon></button>
          <output>140%</output>
        </Zoom>
      </StatusBar>
    </Window>
  );
}
